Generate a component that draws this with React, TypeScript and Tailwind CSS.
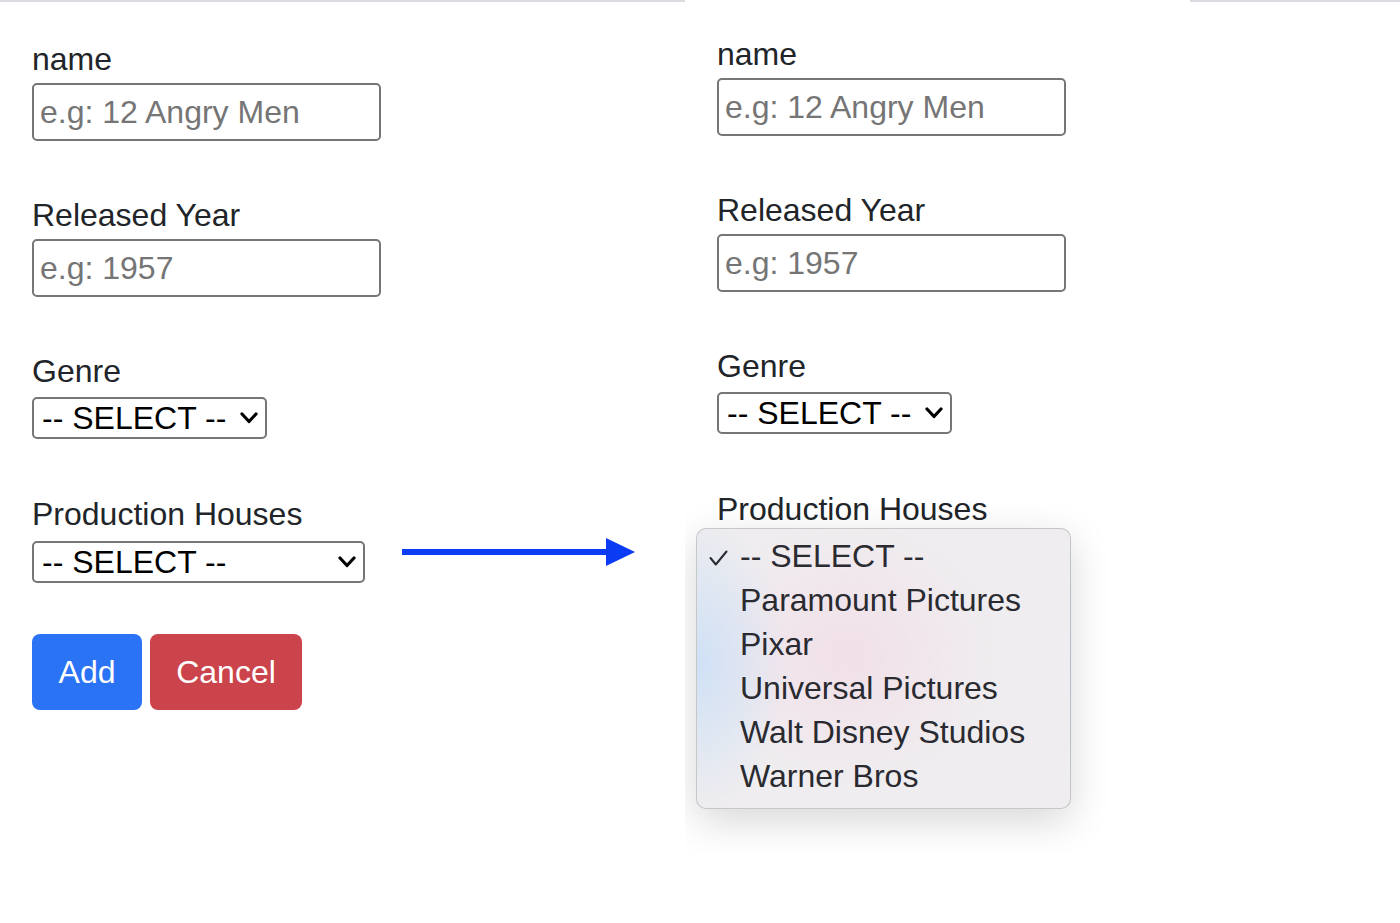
import React from "react";

const font = "font-['Liberation_Sans','Helvetica_Neue',Arial,sans-serif]";

function Label({ children }: { children: React.ReactNode }) {
  return <div className="text-[32px] leading-[44px] text-[#212529]">{children}</div>;
}

function TextInput({ placeholder }: { placeholder: string }) {
  return (
    <input
      readOnly
      placeholder={placeholder}
      className={`${font} block w-[349px] h-[58px] border-2 border-[#767676] rounded-[5px] px-[6px] text-[32px] text-black bg-white outline-none placeholder:text-[#757575]`}
    />
  );
}

function Chevron() {
  return (
    <svg width="18" height="12" viewBox="0 0 18 12" className="shrink-0">
      <polyline points="2,2 9,9.5 16,2" fill="none" stroke="#000" strokeWidth="3.2" strokeLinecap="round" strokeLinejoin="round" />
    </svg>
  );
}

function FakeSelect({ width, hidden }: { width: string; hidden?: boolean }) {
  return (
    <div
      className={`${width} h-[42px] border-2 border-[#767676] rounded-[5px] bg-white flex items-center justify-between pl-[8px] pr-[7px] text-[32px] leading-none text-black ${hidden ? "invisible" : ""}`}
    >
      <span>-- SELECT --</span>
      <Chevron />
    </div>
  );
}

function Buttons() {
  return (
    <div className="flex gap-[8px]">
      <div className="w-[110px] h-[76px] rounded-[8px] bg-[#2b73f5] text-white text-[32px] flex items-center justify-center">
        Add
      </div>
      <div className="w-[152px] h-[76px] rounded-[8px] bg-[#cb444b] text-white text-[32px] flex items-center justify-center">
        Cancel
      </div>
    </div>
  );
}

function Popup() {
  const items = [
    "-- SELECT --",
    "Paramount Pictures",
    "Pixar",
    "Universal Pictures",
    "Walt Disney Studios",
    "Warner Bros",
  ];
  return (
    <div className="absolute left-[-21px] top-[-8px] w-[375px] h-[281px] rounded-[10px] border border-[rgba(0,0,0,0.16)] bg-[#efedef] bg-[image:radial-gradient(ellipse_90px_150px_at_0%_48%,rgba(205,224,246,0.95),transparent),radial-gradient(ellipse_150px_130px_at_40%_45%,rgba(242,222,232,0.9),transparent)] shadow-[0_12px_40px_rgba(0,0,0,0.16)] pt-[5px]">
      {items.map((it, i) => (
        <div key={it} className="relative h-[44px] leading-[44px] pl-[43px] text-[32px] text-[#2a2a31]">
          {i === 0 && (
            <svg width="19" height="16" viewBox="0 0 19 16" className="absolute left-[12px] top-[16px]">
              <polyline points="1.5,8 6.8,14.5 17.5,1.5" fill="none" stroke="#2a2a31" strokeWidth="2" strokeLinecap="round" strokeLinejoin="round" />
            </svg>
          )}
          {it}
        </div>
      ))}
    </div>
  );
}

function Form({ open }: { open?: boolean }) {
  return (
    <div className="flex flex-col">
      <Label>name</Label>
      <div className="mt-[2px]">
        <TextInput placeholder="e.g: 12 Angry Men" />
      </div>
      <div className="mt-[52px]">
        <Label>Released Year</Label>
      </div>
      <div className="mt-[2px]">
        <TextInput placeholder="e.g: 1957" />
      </div>
      <div className="mt-[52px]">
        <Label>Genre</Label>
      </div>
      <div className="mt-[4px]">
        <FakeSelect width="w-[235px]" />
      </div>
      <div className="mt-[53px]">
        <Label>Production Houses</Label>
      </div>
      <div className="mt-[5px] relative">
        <FakeSelect width="w-[333px]" hidden={open} />
        {open && <Popup />}
      </div>
      <div className={`mt-[51px] ${open ? "invisible" : ""}`}>
        <Buttons />
      </div>
    </div>
  );
}

export default function App() {
  return (
    <div className={`${font} w-[1400px] h-[923px] bg-white overflow-hidden flex flex-col`}>
      <div className="flex h-[2px] shrink-0">
        <div className="w-[685px] h-[2px] bg-[#dadae0]" />
        <div className="w-[505px]" />
        <div className="flex-1 h-[2px] bg-[#dadae0]" />
      </div>
      <div className="flex flex-1">
        <div className="w-[685px] shrink-0 pl-[32px] pt-[35px] relative">
          <Form />
          <svg width="236" height="30" viewBox="0 0 236 30" className="absolute left-[401px] top-[535px]">
            <rect x="1" y="12" width="206" height="6" fill="#0b3cf4" />
            <polygon points="205,1 234,15 205,29" fill="#0b3cf4" />
          </svg>
        </div>
        <div className="w-[422px] h-[851px] shrink-0 overflow-hidden pl-[32px] pt-[30px]">
          <Form open />
        </div>
      </div>
    </div>
  );
}
